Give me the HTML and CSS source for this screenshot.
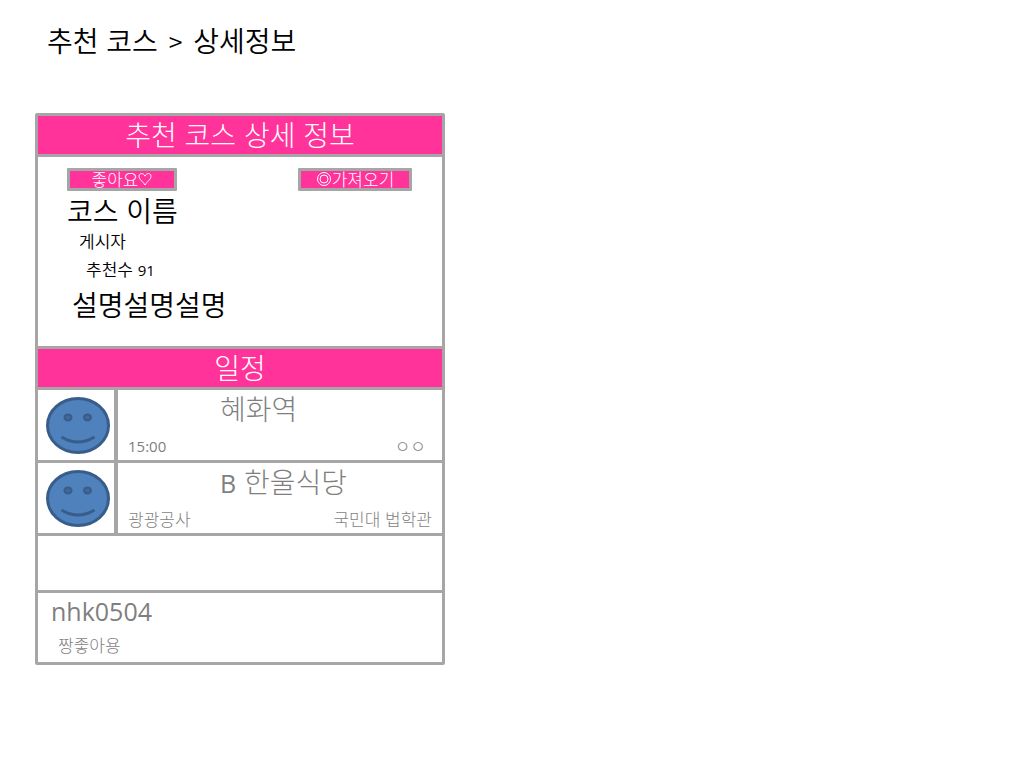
FILE: index.html
```
<!DOCTYPE html>
<html lang="ko">
<head>
    <meta charset="UTF-8">
    <meta name="viewport" content="width=device-width, initial-scale=1.0">
    <title>추천 코스 상세정보</title>
    <link rel="stylesheet" href="styles.css">
</head>
<body>
<h1 class="page-title">추천 코스 <span class="arrow">&gt;</span> 상세정보</h1>

<main class="course">
    <h2 class="bar">추천 코스 상세 정보</h2>

    <section class="info">
        <div class="actions">
            <button type="button" class="btn like">좋아요<svg class="heart" viewBox="0 0 14 14"><path d="M7 13C5 9.500 1 7.500 1 4.200C1 1 5.500 .5 7 4.200C8.500 .5 13 1 13 4.200C13 7.500 9 9.500 7 13Z"/></svg></button>
            <button type="button" class="btn get"><svg class="target" viewBox="0 0 16 16"><circle cx="8" cy="8" r="6.500"/><circle cx="8" cy="8" r="4"/></svg>가져오기</button>
        </div>
        <h3 class="name">코스 이름</h3>
        <p class="writer">게시자</p>
        <p class="likes">추천수 <span class="latin">91</span></p>
        <p class="desc">설명설명설명</p>
    </section>

    <h2 class="bar">일정</h2>

    <ul class="schedule">
        <li class="stop">
            <div class="face">
                <svg viewBox="0 0 64 57">
                    <ellipse class="head" cx="32" cy="28.500" rx="30.500" ry="27"/>
                    <ellipse class="eye" cx="22" cy="20.500" rx="3.500" ry="3"/>
                    <ellipse class="eye" cx="41.500" cy="20.500" rx="3.500" ry="3"/>
                    <path class="mouth" d="M15.500 40Q32 50 48.500 40"/>
                </svg>
            </div>
            <div class="place">
                <h3 class="place-name">혜화역</h3>
                <div class="place-info">
                    <span class="latin">15:00</span>
                    <span class="memo">ㅇㅇ</span>
                </div>
            </div>
        </li>
        <li class="stop">
            <div class="face">
                <svg viewBox="0 0 64 57">
                    <ellipse class="head" cx="32" cy="28.500" rx="30.500" ry="27"/>
                    <ellipse class="eye" cx="22" cy="20.500" rx="3.500" ry="3"/>
                    <ellipse class="eye" cx="41.500" cy="20.500" rx="3.500" ry="3"/>
                    <path class="mouth" d="M15.500 40Q32 50 48.500 40"/>
                </svg>
            </div>
            <div class="place">
                <h3 class="place-name"><span class="letter">B</span> 한울식당</h3>
                <div class="place-info">
                    <span>광광공사</span>
                    <span>국민대 법학관</span>
                </div>
            </div>
        </li>
    </ul>

    <div class="blank"></div>

    <section class="comment">
        <h3 class="user">nhk0504</h3>
        <p class="text">짱좋아용</p>
    </section>
</main>
</body>
</html>
```

FILE: styles.css
```
* {
    box-sizing: border-box;
}
body {
    margin: 0;
    padding: 20px 35px;
    background-color: #fff;
    color: #000;
    font-family: "Noto Sans CJK KR", sans-serif;
    font-size: 17px;
    line-height: 24px;
}
h1, h2, h3, p, ul {
    margin: 0;
    padding: 0;
    font-weight: 300;
}
h1, h2, h3, .desc {
    font-size: 28px;
    line-height: 36px;
}
.page-title {
    margin: 2px 0 54px 12px;
    font-weight: 350;
}
.arrow {
    margin: 0 3px;
    font-size: 25px;
}
.course {
    width: 40vw;
    min-width: 410px;
    border: 3px solid #a6a6a6;
    border-radius: 2px;
}
.bar {
    padding-bottom: 2px;
    background-color: #ff3399;
    color: #fff;
    text-align: center;
    border-bottom: 3px solid #a6a6a6;
}
.info {
    padding: 11px 30px 24px 29px;
    border-bottom: 3px solid #a6a6a6;
}
.actions {
    display: flex;
    justify-content: space-between;
}
.btn {
    display: flex;
    justify-content: center;
    align-items: center;
    height: 23px;
    padding: 0 0 2px;
    background-color: #ff3399;
    border: 3px solid #a6a6a6;
    border-radius: 1px;
    color: #fff;
    font-family: inherit;
    font-size: 17px;
    font-weight: 300;
    line-height: 17px;
    cursor: pointer;
}
.like {
    width: 110px;
}
.get {
    width: 114px;
}
.btn svg {
    fill: none;
    stroke: #fff;
}
.heart {
    width: 14px;
    height: 14px;
}
.target {
    width: 16px;
    height: 16px;
}
.name, .writer, .likes, .desc {
    font-weight: 350;
}
.name {
    line-height: 38px;
}
.writer {
    margin-left: 12px;
}
.likes {
    margin: 4px 0 4px 19px;
}
.desc {
    margin-left: 5px;
}
.latin, .letter, .user {
    font-family: "Open Sans", sans-serif;
    font-weight: 400;
}
.latin {
    font-size: 15px;
}
.letter, .user {
    font-size: 25px;
}
.letter {
    line-height: 24px;
}
.schedule, .comment {
    color: #7f7f7f;
    list-style: none;
}
.stop {
    display: flex;
    border-bottom: 3px solid #a6a6a6;
}
.face {
    display: flex;
    justify-content: center;
    align-items: center;
    width: 80px;
    height: 70px;
    padding-left: 4px;
    border-right: 4px solid #a6a6a6;
}
.face svg {
    width: 64px;
    height: 57px;
}
.head {
    fill: #4f81bd;
    stroke: #385d8a;
    stroke-width: 3;
}
.eye {
    fill: #406898;
    stroke: #385d8a;
    stroke-width: 2;
}
.mouth {
    fill: none;
    stroke: #385d8a;
    stroke-width: 3;
}
.place {
    flex: 1;
    padding: 0 10px;
}
.place-name {
    margin-left: 92px;
}
.place-info {
    display: flex;
    justify-content: space-between;
    margin-top: 8px;
    font-weight: 300;
}
.memo {
    margin-right: 6px;
}
.blank {
    height: 57px;
    border-bottom: 3px solid #a6a6a6;
}
.comment {
    padding: 0 13px 5px;
}
.text {
    margin: 4px 0 0 7px;
}
```
